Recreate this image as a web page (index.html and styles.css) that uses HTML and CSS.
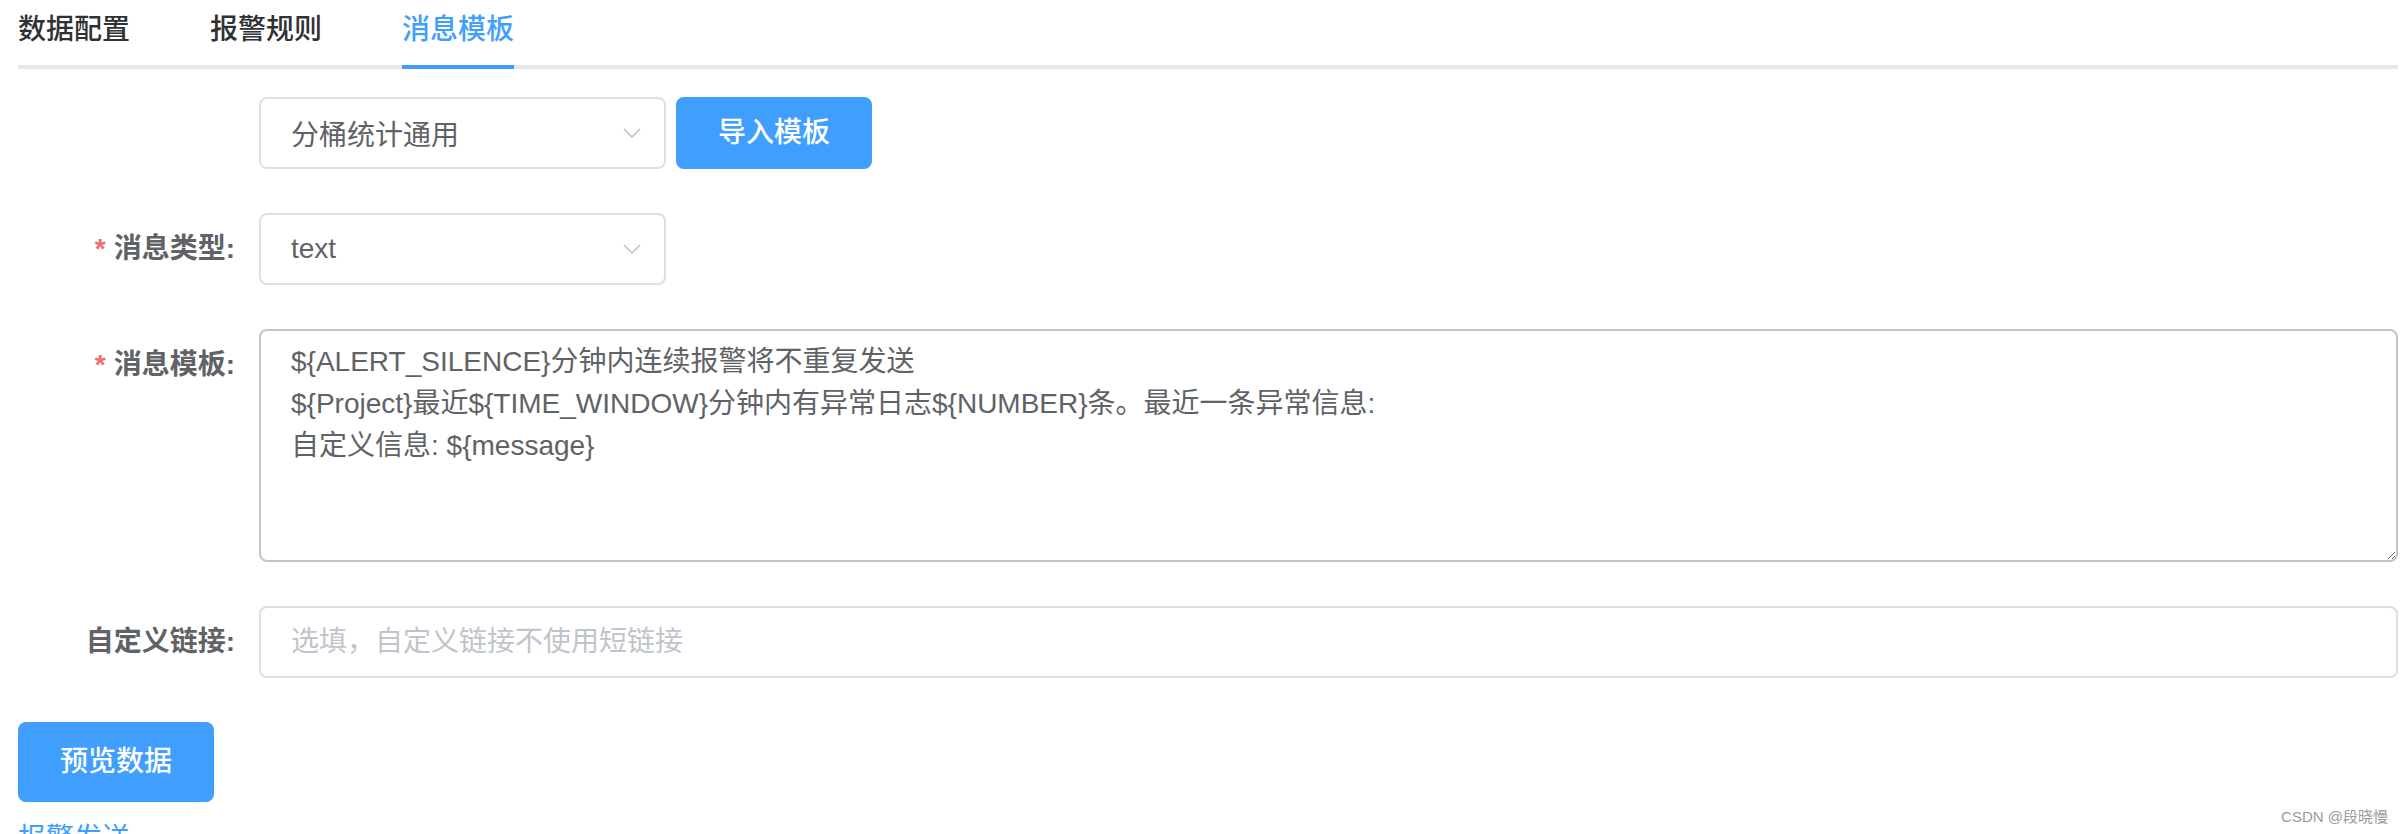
FILE: index.html
```html
<!DOCTYPE html>
<html lang="zh-CN">
<head>
<meta charset="UTF-8">
<meta name="viewport" content="width=device-width, initial-scale=1.0">
<title>消息模板</title>
<link rel="stylesheet" href="styles.css">
</head>
<body>
    <div class="page">
        <!-- Tabs -->
        <div class="tabs-nav">
            <div class="tab"><span>数据配置</span></div>
            <div class="tab"><span>报警规则</span></div>
            <div class="tab active"><span>消息模板</span></div>
        </div>

        <!-- Form -->
        <div class="form">
            <div class="form-item">
                <label class="form-label"></label>
                <div class="form-content">
                    <div class="select">
                        <span>分桶统计通用</span>
                        <svg class="arrow" width="18" height="10" viewBox="0 0 18 10">
                            <polyline points="1,1 9,9 17,1" fill="none" stroke="#c0c4cc" stroke-width="1.6"/>
                        </svg>
                    </div>
                    <button class="btn btn-medium">导入模板</button>
                </div>
            </div>

            <div class="form-item">
                <label class="form-label required">消息类型:</label>
                <div class="form-content">
                    <div class="select">
                        <span>text</span>
                        <svg class="arrow" width="18" height="10" viewBox="0 0 18 10">
                            <polyline points="1,1 9,9 17,1" fill="none" stroke="#c0c4cc" stroke-width="1.6"/>
                        </svg>
                    </div>
                </div>
            </div>

            <div class="form-item">
                <label class="form-label required">消息模板:</label>
                <div class="form-content">
                    <textarea class="textarea">${ALERT_SILENCE}分钟内连续报警将不重复发送
${Project}最近${TIME_WINDOW}分钟内有异常日志${NUMBER}条。最近一条异常信息:
自定义信息: ${message}</textarea>
                </div>
            </div>

            <div class="form-item">
                <label class="form-label">自定义链接:</label>
                <div class="form-content">
                    <input class="input" type="text" placeholder="选填，自定义链接不使用短链接">
                </div>
            </div>
        </div>

        <button class="btn btn-default">预览数据</button>

        <div class="section-title">报警发送</div>
    </div>

    <div class="watermark">CSDN @段晓慢</div>
</body>
</html>
```

FILE: styles.css
```css
html, body {
    margin: 0;
    padding: 0;
    height: 100%;
    overflow: hidden;
    background: #fff;
    font-family: "Liberation Sans", "Noto Sans CJK SC", sans-serif;
}

.page {
    width: 2380px;
    padding-left: 18px;
}

/* Tabs */
.tabs-nav {
    display: flex;
    border-bottom: 4px solid #e4e7ed;
    margin-bottom: 28px;
}

.tab {
    padding: 0 40px;
    font-size: 28px;
    font-weight: 500;
    color: #303133;
}

.tab:first-child {
    padding-left: 0;
}

.tab:last-child {
    padding-right: 0;
}

.tab span {
    display: block;
    height: 65px;
    line-height: 60px;
}

.tab.active {
    color: #409eff;
}

.tab.active span {
    border-bottom: 4px solid #409eff;
    margin-bottom: -4px;
}

/* Form */
.form-item {
    display: flex;
    margin-bottom: 44px;
}

.form-label {
    width: 241px;
    flex-shrink: 0;
    box-sizing: border-box;
    padding-right: 24px;
    text-align: right;
    font-size: 28px;
    line-height: 72px;
    font-weight: 600;
    color: #606266;
}

.form-label.required::before {
    content: "*";
    color: #f56c6c;
    margin-right: 8px;
}

.form-content {
    flex: 1;
    display: flex;
    align-items: flex-start;
}

.select {
    width: 407px;
    height: 72px;
    box-sizing: border-box;
    border: 2px solid #dcdfe6;
    border-radius: 8px;
    padding: 0 23px 0 30px;
    display: flex;
    align-items: center;
    justify-content: space-between;
    font-size: 28px;
    color: #606266;
}

.textarea {
    width: 100%;
    height: 233px;
    box-sizing: border-box;
    border: 2px solid #c0c4cc;
    border-radius: 8px;
    padding: 10px 30px;
    font-family: inherit;
    font-size: 28px;
    line-height: 42px;
    color: #606266;
    resize: vertical;
    outline: none;
}

.input {
    width: 100%;
    height: 72px;
    box-sizing: border-box;
    border: 2px solid #dcdfe6;
    border-radius: 8px;
    padding: 0 30px;
    font-family: inherit;
    font-size: 28px;
    color: #606266;
    outline: none;
}

.input::placeholder {
    color: #c0c4cc;
}

/* Buttons */
.btn {
    border: 2px solid #409eff;
    background: #409eff;
    color: #fff;
    border-radius: 8px;
    font-family: inherit;
    font-size: 28px;
    font-weight: 500;
    line-height: 1;
    cursor: pointer;
}

.btn-medium {
    height: 72px;
    padding: 0 40px;
    margin-left: 10px;
}

.btn-default {
    height: 80px;
    padding: 0 40px;
    display: block;
}

.section-title {
    margin-top: 16px;
    font-size: 28px;
    line-height: 42px;
    color: #409eff;
}

.watermark {
    position: absolute;
    right: 16px;
    bottom: 8px;
    font-size: 15px;
    color: #9a9a9a;
}
```
